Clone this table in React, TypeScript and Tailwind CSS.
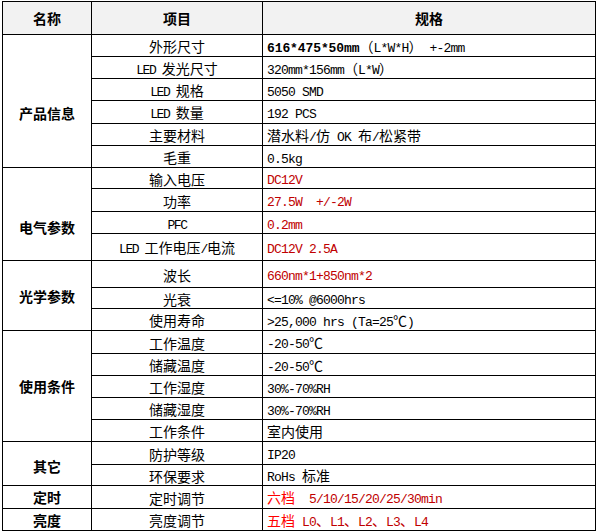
import React from "react";

const CJK_RE = /[\u3000-\u9fff\uff00-\uffef\u2103]+/g;

function Mixed({ text, latin }: { text: string; latin: string }) {
  const parts: { t: string; cjk: boolean }[] = [];
  let last = 0;
  text.replace(CJK_RE, (m, idx: number) => {
    if (idx > last) parts.push({ t: text.slice(last, idx), cjk: false });
    parts.push({ t: m, cjk: true });
    last = idx + m.length;
    return m;
  });
  if (last < text.length) parts.push({ t: text.slice(last), cjk: false });
  return (
    <span className="whitespace-pre">
      {parts.map((p, i) =>
        p.cjk ? (
          <span key={i} className="font-['Noto_Sans_CJK_SC',sans-serif] text-[14px] tracking-normal">
            {p.t}
          </span>
        ) : (
          <span key={i} className={latin}>
            {p.t}
          </span>
        )
      )}
    </span>
  );
}

const itemLatin = "font-['Liberation_Mono',monospace] text-[13px] tracking-[-1.4px]";
const specLatin = "font-['Liberation_Mono',monospace] text-[13px] tracking-[-0.8px]";

type Row = { item: string; spec: React.ReactNode };

function Spec({ text, red }: { text: string; red?: boolean }) {
  return (
    <span className={red ? "text-[#c00000]" : "text-black"}>
      <Mixed text={text} latin={specLatin} />
    </span>
  );
}

const groups: { name: string; pad: string; span: string; rows: Row[] }[] = [
  {
    name: "产品信息",
    pad: "pt-[24px]",
    span: "row-span-6",
    rows: [
      {
        item: "外形尺寸",
        spec: (
          <span className="whitespace-pre">
            <span className="font-['Liberation_Mono',monospace] text-[13px] font-bold tracking-[-0.1px]">616*475*50mm</span>
            <Mixed text="（L*W*H） +-2mm" latin={specLatin} />
          </span>
        ),
      },
      { item: "LED 发光尺寸", spec: <Spec text="320mm*156mm（L*W）" /> },
      { item: "LED 规格", spec: <Spec text="5050 SMD" /> },
      { item: "LED 数量", spec: <Spec text="192 PCS" /> },
      { item: "主要材料", spec: <Spec text="潜水料/仿 OK 布/松紧带" /> },
      { item: "毛重", spec: <Spec text="0.5kg" /> },
    ],
  },
  {
    name: "电气参数",
    pad: "pt-[26px]",
    span: "row-span-4",
    rows: [
      { item: "输入电压", spec: <Spec text="DC12V" red /> },
      { item: "功率", spec: <Spec text="27.5W  +/-2W" red /> },
      { item: "PFC", spec: <Spec text="0.2mm" red /> },
      { item: "LED 工作电压/电流", spec: <Spec text="DC12V 2.5A" red /> },
    ],
  },
  {
    name: "光学参数",
    pad: "",
    span: "row-span-3",
    rows: [
      { item: "波长", spec: <Spec text="660nm*1+850nm*2" red /> },
      { item: "光衰", spec: <Spec text="<=10% @6000hrs" /> },
      { item: "使用寿命", spec: <Spec text=">25,000 hrs (Ta=25℃)" /> },
    ],
  },
  {
    name: "使用条件",
    pad: "",
    span: "row-span-5",
    rows: [
      { item: "工作温度", spec: <Spec text="-20-50℃" /> },
      { item: "储藏温度", spec: <Spec text="-20-50℃" /> },
      { item: "工作湿度", spec: <Spec text="30%-70%RH" /> },
      { item: "储藏湿度", spec: <Spec text="30%-70%RH" /> },
      { item: "工作条件", spec: <Spec text="室内使用" /> },
    ],
  },
  {
    name: "其它",
    pad: "pt-[4px]",
    span: "row-span-2",
    rows: [
      { item: "防护等级", spec: <Spec text="IP20" /> },
      { item: "环保要求", spec: <Spec text="RoHs 标准" /> },
    ],
  },
  {
    name: "定时",
    pad: "",
    span: "row-span-1",
    rows: [
      {
        item: "定时调节",
        spec: (
          <span className="whitespace-pre text-[#c00000]">
            <span className="font-['Noto_Sans_CJK_SC',sans-serif] text-[14px] text-[#ff0000]">六档</span>
            <span className={specLatin}>  5/10/15/20/25/30min</span>
          </span>
        ),
      },
    ],
  },
  {
    name: "亮度",
    pad: "",
    span: "row-span-1",
    rows: [
      {
        item: "亮度调节",
        spec: (
          <span className="whitespace-pre text-[#c00000]">
            <span className="font-['Noto_Sans_CJK_SC',sans-serif] text-[14px] text-[#ff0000]">五档</span>
            <Mixed text=" L0、L1、L2、L3、L4" latin={specLatin} />
          </span>
        ),
      },
    ],
  },
];

export default function App() {
  return (
    <div className="w-[597px] h-[532px] bg-white pt-px pl-[2px]">
      <div className="w-[594px] grid grid-cols-[88px_170px_332px] grid-rows-[32px_21px_21px_21px_22px_21px_21px_20px_22px_21px_26px_26px_20px_21px_22px_21px_21px_21px_21px_22px_20px_22px_21px] gap-px bg-black p-px leading-none text-black">
        <div className="col-start-1 bg-[#f2f2f2] flex items-center justify-center font-['Noto_Sans_CJK_SC',sans-serif] text-[14px] font-bold">
          名称
        </div>
        <div className="col-start-2 bg-[#f2f2f2] flex items-center justify-center font-['Noto_Sans_CJK_SC',sans-serif] text-[14px] font-bold">
          项目
        </div>
        <div className="col-start-3 bg-[#f2f2f2] flex items-center justify-center font-['Noto_Sans_CJK_SC',sans-serif] text-[14px] font-bold">
          规格
        </div>
        {groups.map((g) => (
          <React.Fragment key={g.name}>
            <div
              className={`col-start-1 ${g.span} ${g.pad} bg-white flex items-center justify-center font-['Noto_Sans_CJK_SC',sans-serif] text-[14px] font-bold`}
            >
              {g.name}
            </div>
            {g.rows.map((r) => (
              <React.Fragment key={r.item}>
                <div className="col-start-2 bg-white flex items-center justify-center pt-px">
                  <Mixed text={r.item} latin={itemLatin} />
                </div>
                <div className="col-start-3 bg-white flex items-center pl-[4px] pt-px">{r.spec}</div>
              </React.Fragment>
            ))}
          </React.Fragment>
        ))}
      </div>
    </div>
  );
}
